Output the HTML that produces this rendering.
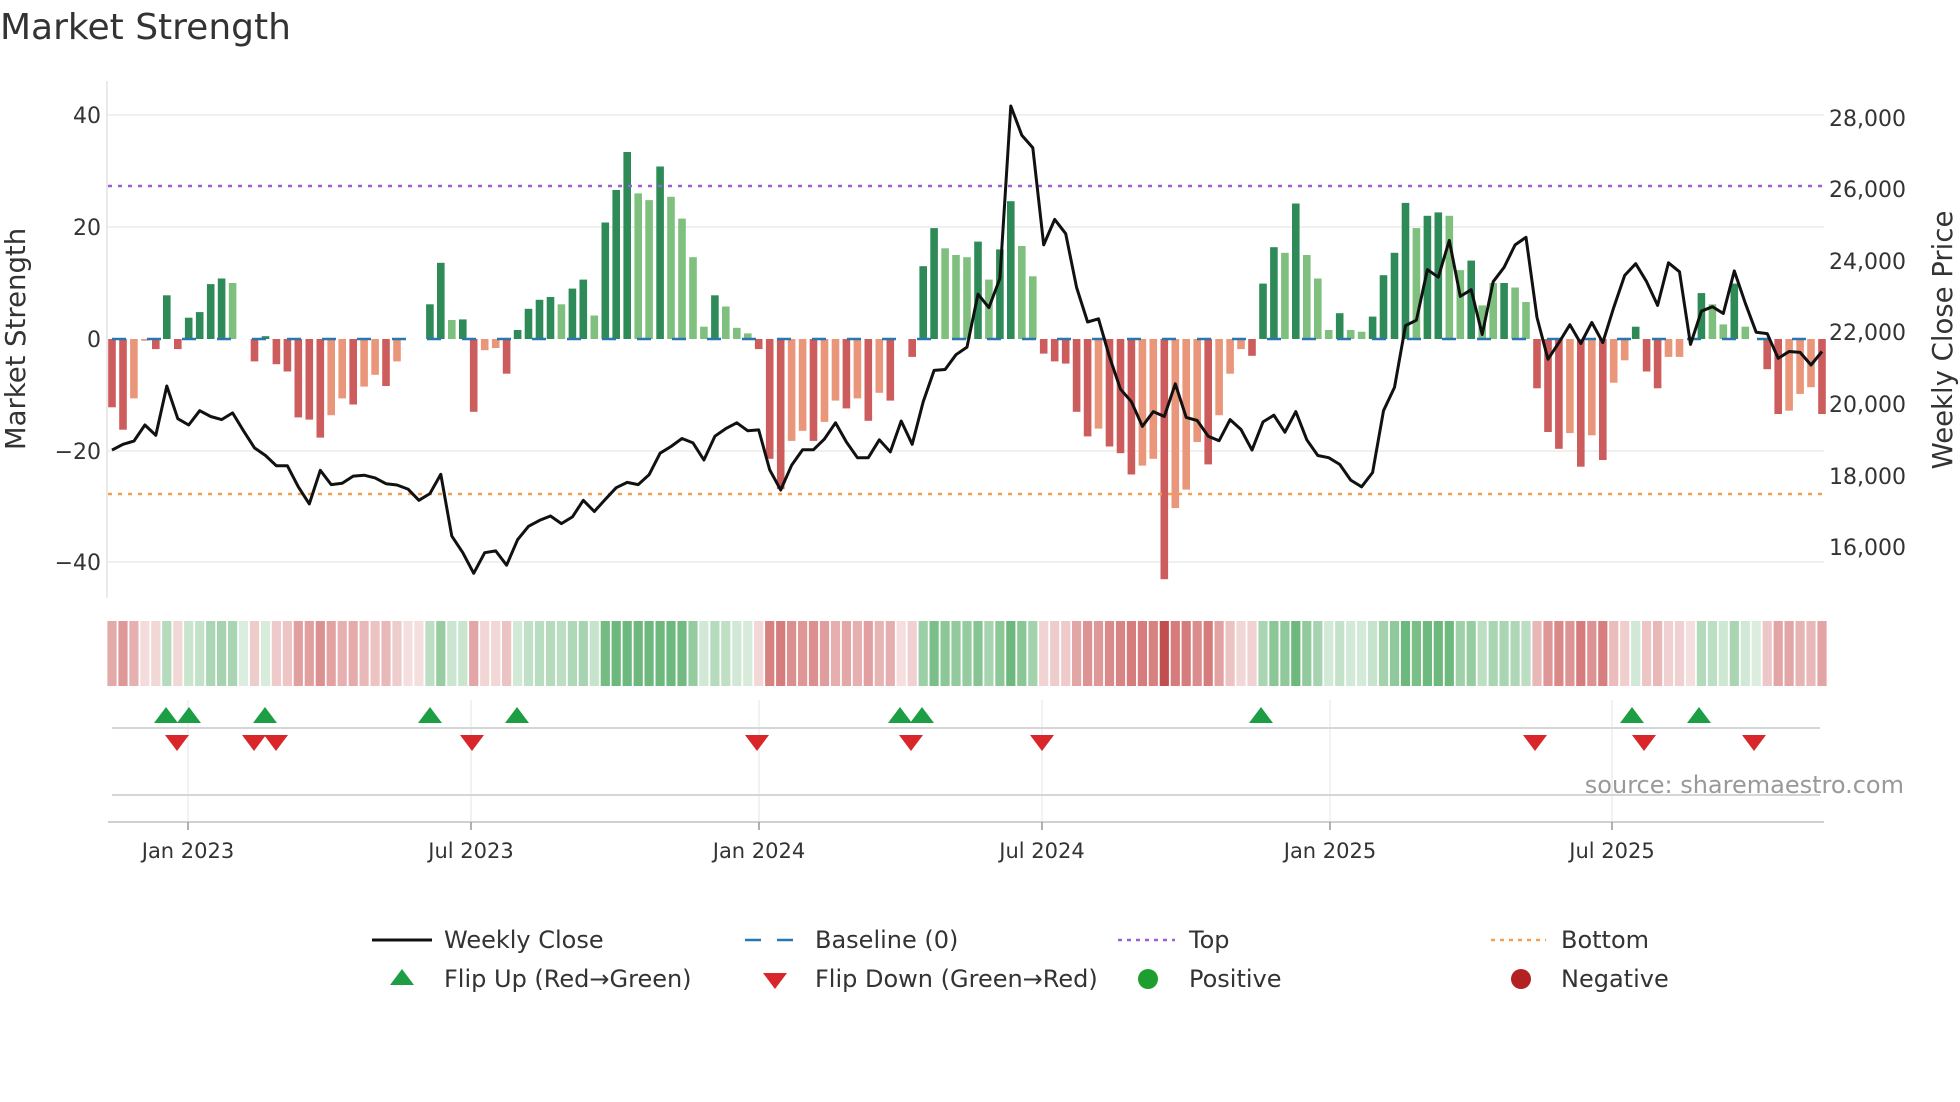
<!DOCTYPE html>
<html><head><meta charset="utf-8"><style>
html,body{margin:0;padding:0;background:#fff;width:1960px;height:1102px;overflow:hidden}
svg{display:block;font-family:"DejaVu Sans","Liberation Sans",sans-serif}
</style></head><body>
<svg id="s" width="1960" height="1102" viewBox="0 0 1960 1102" xmlns="http://www.w3.org/2000/svg">
<text x="0" y="39" font-size="36" fill="#333">Market Strength</text>
<g stroke="#ececec" stroke-width="1.5">
<line x1="108" y1="115" x2="1824" y2="115"/><line x1="108" y1="227" x2="1824" y2="227"/>
<line x1="108" y1="451" x2="1824" y2="451"/><line x1="108" y1="562" x2="1824" y2="562"/>
</g>
<line x1="107" y1="81" x2="107" y2="598" stroke="#e4e4e4" stroke-width="1.5"/>
<g font-size="22" fill="#333" text-anchor="end">
<text x="101" y="123">40</text><text x="101" y="235">20</text><text x="101" y="347">0</text>
<text x="101" y="459">−20</text><text x="101" y="570">−40</text>
</g>
<g font-size="22" fill="#333">
<text x="1829" y="126">28,000</text><text x="1829" y="197">26,000</text><text x="1829" y="269">24,000</text>
<text x="1829" y="340">22,000</text><text x="1829" y="412">20,000</text><text x="1829" y="484">18,000</text><text x="1829" y="555">16,000</text>
</g>
<text transform="translate(25,339) rotate(-90)" font-size="27.5" fill="#333" text-anchor="middle">Market Strength</text>
<text transform="translate(1952,340) rotate(-90)" font-size="27.5" fill="#333" text-anchor="middle">Weekly Close Price</text>
<g id="bars"></g>
<line x1="108" y1="186" x2="1824" y2="186" stroke="#9b5fd6" stroke-width="2.5" stroke-dasharray="4,6"/>
<line x1="108" y1="494" x2="1824" y2="494" stroke="#f0a050" stroke-width="2.5" stroke-dasharray="4,6"/>
<line x1="112" y1="339" x2="1826" y2="339" stroke="#2a77b0" stroke-width="2.5" stroke-dasharray="14,21"/>
<polyline id="pl" fill="none" stroke="#111" stroke-width="3" stroke-linejoin="round"/>
<g id="heat"></g>
<g stroke="#eceef2" stroke-width="1.5">
<line x1="188" y1="700" x2="188" y2="822"/><line x1="471" y1="700" x2="471" y2="822"/><line x1="759" y1="700" x2="759" y2="822"/>
<line x1="1042" y1="700" x2="1042" y2="822"/><line x1="1330" y1="700" x2="1330" y2="822"/><line x1="1612" y1="700" x2="1612" y2="822"/>
</g>
<line x1="112" y1="728" x2="1820" y2="728" stroke="#d6d6d6" stroke-width="2"/>
<line x1="112" y1="795" x2="1820" y2="795" stroke="#d6d6d6" stroke-width="2"/>
<line x1="108" y1="822" x2="1824" y2="822" stroke="#d0d0d0" stroke-width="2"/>
<g stroke="#999" stroke-width="1.5">
<line x1="188" y1="822" x2="188" y2="830"/><line x1="471" y1="822" x2="471" y2="830"/><line x1="759" y1="822" x2="759" y2="830"/>
<line x1="1042" y1="822" x2="1042" y2="830"/><line x1="1330" y1="822" x2="1330" y2="830"/><line x1="1612" y1="822" x2="1612" y2="830"/>
</g>
<g id="mk"></g>
<g font-size="21" fill="#333" text-anchor="middle">
<text x="188" y="858">Jan 2023</text><text x="471" y="858">Jul 2023</text><text x="759" y="858">Jan 2024</text>
<text x="1042" y="858">Jul 2024</text><text x="1330" y="858">Jan 2025</text><text x="1612" y="858">Jul 2025</text>
</g>
<text x="1904" y="793" font-size="24" fill="#999" text-anchor="end">source: sharemaestro.com</text>
<g font-size="24" fill="#333">
<line x1="372" y1="940" x2="432" y2="940" stroke="#111" stroke-width="3"/><text x="444" y="948">Weekly Close</text>
<line x1="745" y1="940" x2="800" y2="940" stroke="#2a77b0" stroke-width="2.5" stroke-dasharray="16,16"/><text x="815" y="948">Baseline (0)</text>
<line x1="1118" y1="940" x2="1175" y2="940" stroke="#9b5fd6" stroke-width="2.5" stroke-dasharray="4,5"/><text x="1189" y="948">Top</text>
<line x1="1491" y1="940" x2="1546" y2="940" stroke="#f0a050" stroke-width="2.5" stroke-dasharray="4,5"/><text x="1561" y="948">Bottom</text>
<polygon points="390,985 414,985 402,969" fill="#1e9e44"/><text x="444" y="987">Flip Up (Red→Green)</text>
<polygon points="763,973 787,973 775,989" fill="#d9262a"/><text x="815" y="987">Flip Down (Green→Red)</text>
<circle cx="1148" cy="979" r="10" fill="#1e9e2e"/><text x="1189" y="987">Positive</text>
<circle cx="1521" cy="979" r="10" fill="#b22222"/><text x="1561" y="987">Negative</text>
</g>
</svg>
<script>
var V=[[-12.2,'r'],[-16.2,'r'],[-10.6,'s'],[-0.3,'s'],[-1.8,'r'],[7.8,'g'],[-1.8,'r'],[3.8,'g'],[4.8,'g'],[9.8,'g'],[10.8,'g'],[10,'l'],[0,'l'],[-4,'r'],[0.5,'g'],[-4.5,'r'],[-5.8,'r'],[-14,'r'],[-14.4,'r'],[-17.6,'r'],[-13.6,'s'],[-10.6,'s'],[-11.7,'r'],[-8.5,'s'],[-6.4,'s'],[-8.4,'r'],[-4,'s'],[0,'s'],[0,'s'],[6.2,'g'],[13.6,'g'],[3.4,'l'],[3.5,'g'],[-13,'r'],[-2,'s'],[-1.6,'s'],[-6.2,'r'],[1.6,'g'],[5.4,'g'],[7,'g'],[7.5,'g'],[6.2,'l'],[9,'g'],[10.6,'g'],[4.2,'l'],[20.8,'g'],[26.6,'g'],[33.4,'g'],[26,'l'],[24.8,'l'],[30.8,'g'],[25.4,'l'],[21.5,'l'],[14.6,'l'],[2.2,'l'],[7.8,'g'],[5.8,'l'],[2,'l'],[1,'l'],[-1.8,'r'],[-21.4,'r'],[-26.8,'r'],[-18.2,'s'],[-16.4,'s'],[-18.2,'r'],[-14.8,'s'],[-11,'s'],[-12.4,'r'],[-10.6,'s'],[-14.6,'r'],[-9.6,'s'],[-11,'r'],[0,'s'],[-3.2,'r'],[13,'g'],[19.8,'g'],[16.2,'l'],[15,'l'],[14.6,'l'],[17.4,'g'],[10.6,'l'],[16,'g'],[24.6,'g'],[16.6,'l'],[11.2,'l'],[-2.6,'r'],[-4,'r'],[-4.4,'r'],[-13,'r'],[-17.4,'r'],[-16,'s'],[-19.2,'r'],[-20.4,'r'],[-24.2,'r'],[-22.6,'s'],[-21.4,'s'],[-42.9,'r'],[-30.2,'s'],[-26.9,'s'],[-18.4,'s'],[-22.4,'r'],[-13.6,'s'],[-6.2,'s'],[-1.8,'s'],[-3,'r'],[9.9,'g'],[16.4,'g'],[15.4,'l'],[24.2,'g'],[15,'l'],[10.8,'l'],[1.6,'l'],[4.6,'g'],[1.6,'l'],[1.3,'l'],[4,'g'],[11.4,'g'],[15.4,'g'],[24.3,'g'],[19.8,'l'],[22,'g'],[22.6,'g'],[22,'l'],[12.3,'l'],[14,'g'],[6,'l'],[10,'l'],[10,'g'],[9.2,'l'],[6.6,'l'],[-8.8,'r'],[-16.6,'r'],[-19.6,'r'],[-16.8,'s'],[-22.8,'r'],[-17.2,'s'],[-21.6,'r'],[-7.8,'s'],[-3.8,'s'],[2.2,'g'],[-5.8,'r'],[-8.8,'r'],[-3.2,'s'],[-3.2,'s'],[0,'s'],[8.2,'g'],[6.2,'l'],[2.6,'l'],[9.9,'g'],[2.2,'l'],[0,'s'],[-5.4,'r'],[-13.4,'r'],[-12.8,'s'],[-9.8,'s'],[-8.6,'s'],[-13.4,'r']];
var P=[1008,995,988,952,975,865,938,952,920,933,940,925,965,1003,1020,1043,1043,1090,1128,1053,1085,1082,1066,1064,1070,1083,1086,1095,1120,1105,1062,1200,1237,1283,1237,1233,1265,1208,1178,1165,1155,1172,1157,1120,1145,1118,1092,1080,1085,1063,1015,1000,982,992,1030,977,960,947,965,963,1052,1097,1042,1007,1007,983,947,990,1025,1025,985,1012,943,995,900,830,828,795,778,660,690,625,240,305,333,550,493,525,645,722,715,800,872,900,955,922,933,860,935,942,977,987,940,962,1008,945,930,968,922,985,1020,1025,1040,1075,1090,1058,920,868,730,718,605,622,540,665,650,750,632,600,550,533,712,805,768,728,770,723,768,690,618,592,632,685,590,610,772,698,688,703,608,680,745,748,803,788,790,818,788];
var C={g:'#2e8b57',l:'#7fc07f',r:'#cd5c5c',s:'#e9967a'};
var n=V.length,x0=112,dx=(1822-112)/(n-1),b='',h='',pts=[];
for(var i=0;i<n;i++){var x=x0+i*dx,v=V[i][0],y=339-v*5.6;
 if(Math.abs(v)>0.05)b+='<rect x="'+(x-3.8).toFixed(1)+'" y="'+Math.min(y,339).toFixed(1)+'" width="7.6" height="'+Math.abs(v*5.6).toFixed(1)+'" fill="'+C[V[i][1]]+'"/>';
 var a=Math.min(1,0.25+Math.abs(v)/30);
 var pos=v>0||(v==0&&i>0&&V[i-1][0]>0);
 var col=pos?'rgba(60,160,80,'+(a*0.75).toFixed(2)+')':'rgba(200,80,80,'+(a*0.75).toFixed(2)+')';
 if(Math.abs(v)>40)col='rgba(190,70,70,0.95)';
 h+='<rect x="'+(x-4.6).toFixed(1)+'" y="621" width="9.2" height="65" fill="'+col+'"/>';
 pts.push(x.toFixed(1)+','+(339+(P[i]-760)*0.448).toFixed(1));}
document.getElementById('bars').innerHTML=b;document.getElementById('heat').innerHTML=h;
document.getElementById('pl').setAttribute('points',pts.join(' '));
var U=[166,189,265,430,517,900,922,1261,1632,1699],D=[177,254,276,472,757,911,1042,1535,1644,1754],m='';
U.forEach(function(x){m+='<polygon points="'+(x-12)+',723 '+(x+12)+',723 '+x+',707" fill="#1e9e44"/>';});
D.forEach(function(x){m+='<polygon points="'+(x-12)+',735 '+(x+12)+',735 '+x+',751" fill="#d9262a"/>';});
document.getElementById('mk').innerHTML=m;
</script>
</body></html>
